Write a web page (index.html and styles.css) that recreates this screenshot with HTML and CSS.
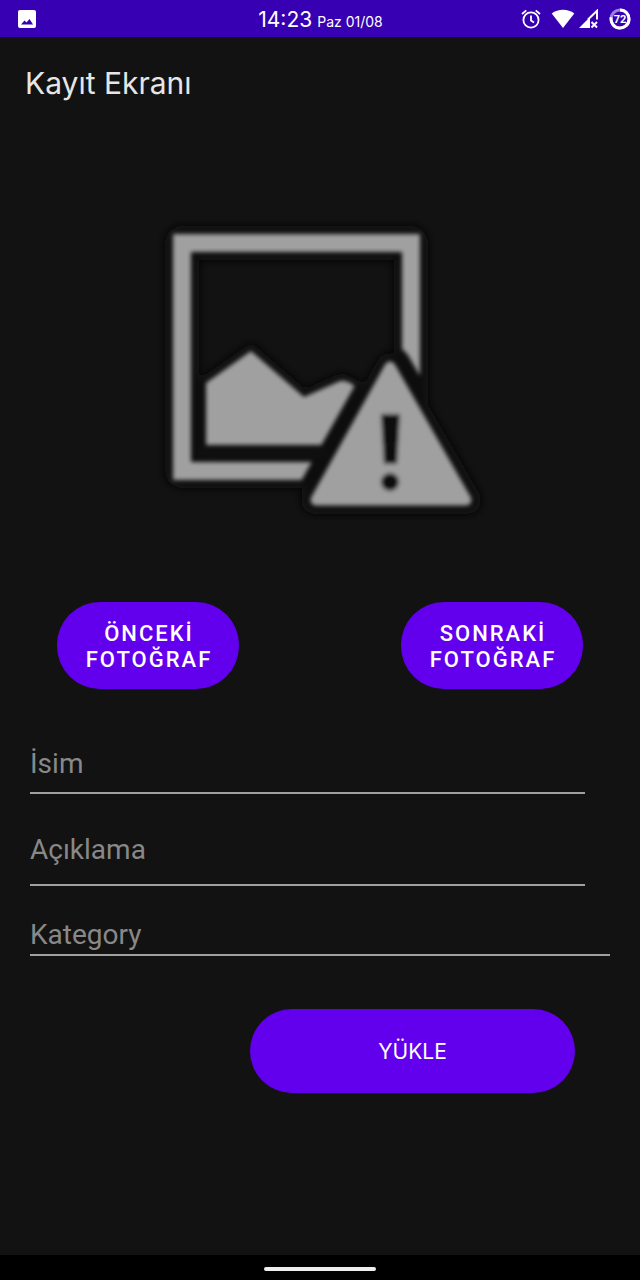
FILE: index.html
```html
<!DOCTYPE html>
<html lang="tr">
<head>
<meta charset="utf-8">
<meta name="viewport" content="width=device-width, initial-scale=1">
<title>Kayıt Ekranı</title>
<link rel="stylesheet" href="styles.css">
</head>
<body>
<div class="screen">
  <header class="status-bar">
    <svg class="status-photo" width="18" height="18" viewBox="0 0 18 18" aria-hidden="true">
      <rect width="18" height="18" rx="2" fill="#fff"/>
      <path d="M3 14.5 6.5 10.5 8.5 12.5 11.5 9 15 14.5Z" fill="#3700b3"/>
    </svg>
    <div class="clock"><span class="time">14:23</span><span class="date">Paz 01/08</span></div>
    <div class="status-icons">
      <svg width="20" height="20" viewBox="0 0 20 20" fill="none" stroke="#fff" stroke-width="1.8" aria-hidden="true">
        <circle cx="10" cy="11" r="7.6"/>
        <path d="M10 6.5V11.4L13 13.4M1 5 5.3 1.4M19 5 14.7 1.4"/>
      </svg>
      <svg width="24" height="20" viewBox="0 0 24 20" fill="#fff" aria-hidden="true">
        <path d="M.7 4.5C7-.5 17-.5 23.3 4.5L12 19Z"/>
      </svg>
      <svg width="20" height="20" viewBox="0 0 20 20" fill="none" stroke="#fff" aria-hidden="true">
        <path d="M0 19 11 8V19Z" fill="#fff" stroke="none"/>
        <path d="M9 10.5 18 1.8V10.5" stroke-width="2"/>
        <path d="M12.5 13 18 18.5M18 13 12.5 18.5" stroke-width="2"/>
      </svg>
      <svg width="22" height="22" viewBox="0 0 22 22" fill="none" aria-hidden="true">
        <circle cx="11" cy="11" r="9" stroke="#9b80d9" stroke-width="3"/>
        <path d="M11 2A9 9 0 1 1 2.2 9.3" stroke="#fff" stroke-width="3"/>
        <text x="11" y="15" text-anchor="middle" class="battery-level">72</text>
      </svg>
    </div>
  </header>

  <main class="content">
    <h1 class="title">Kayıt Ekranı</h1>

    <svg class="photo" viewBox="0 0 340 310" role="img" aria-label="Fotoğraf yok">
      <defs>
        <filter id="soft" x="-10%" y="-10%" width="120%" height="120%"><feGaussianBlur stdDeviation="2.2"/></filter>
        <filter id="shade" x="-10%" y="-10%" width="120%" height="120%"><feGaussianBlur stdDeviation="5"/></filter>
        <mask id="warning-gap" maskUnits="userSpaceOnUse" x="0" y="0" width="340" height="310">
          <rect width="340" height="310" fill="#fff"/>
          <path d="M240 157 165 290H317Z" fill="#000" stroke="#000" stroke-width="43" stroke-linejoin="round"/>
        </mask>
      </defs>
      <g filter="url(#shade)" fill="none" stroke="#090909" stroke-linejoin="round">
        <path d="M32 33H261V261H32Z" stroke-width="34"/>
        <path d="M56 173 101 141 154 187 192 170 205 177 172 235H56Z" stroke-width="14"/>
        <path d="M240 157 165 290H317Z" stroke-width="28"/>
      </g>
      <g filter="url(#soft)">
        <g mask="url(#warning-gap)">
          <path d="M32 33H261V261H32Z" fill="none" stroke="#a0a0a0" stroke-width="18"/>
          <path d="M56 173 101 141 154 187 190 171Q197 169 207 178L230 235H56Z" fill="#a0a0a0"/>
        </g>
        <path d="M240 157 166 290H316Z" fill="#a0a0a0" stroke="#a0a0a0" stroke-width="11" stroke-linejoin="round"/>
        <path d="M231 204H250L247 254H234Z" fill="#090909"/>
        <circle cx="240" cy="272" r="9" fill="#090909"/>
      </g>
    </svg>

    <div class="photo-nav">
      <button class="button nav-button" type="button">ÖNCEKİ FOTOĞRAF</button>
      <button class="button nav-button" type="button">SONRAKİ FOTOĞRAF</button>
    </div>

    <form class="form">
      <input class="field name" type="text" placeholder="İsim" aria-label="İsim">
      <input class="field description" type="text" placeholder="Açıklama" aria-label="Açıklama">
      <input class="field category" type="text" placeholder="Kategory" aria-label="Kategory">
      <button class="button upload" type="button">YÜKLE</button>
    </form>
  </main>

  <footer class="gesture-bar"><span class="gesture-handle"></span></footer>
</div>
</body>
</html>
```
FILE: styles.css
```css
* { box-sizing: border-box; }

body {
  margin: 0;
  background: #121212;
  color: #fff;
  font-family: Roboto, "Noto Sans", sans-serif;
}

.screen {
  display: flex;
  flex-direction: column;
  min-height: 100vh;
}

.status-bar {
  display: grid;
  grid-template-columns: 1fr auto 1fr;
  align-items: center;
  height: 37px;
  padding: 0 9px 0 18px;
  background: #3700b3;
}

.clock {
  display: flex;
  align-items: baseline;
  gap: 5px;
  padding: 2px 8px 0 0;
  font-family: Inter, sans-serif;
}

.time { font-size: 21px; font-weight: 400; }
.date { font-size: 14px; }

.status-icons {
  display: flex;
  align-items: center;
  justify-content: flex-end;
  gap: 10px;
}

.status-icons svg:nth-child(3) { margin-left: -6px; }

.battery-level {
  fill: #fff;
  font: 700 11px Roboto, sans-serif;
}

.content {
  display: flex;
  flex: 1;
  flex-direction: column;
}

.title {
  margin: 26px 25px 0;
  font: 400 30px/40px Inter, sans-serif;
  color: #e6e6e6;
}

.photo {
  width: 53.125%;
  margin: 107px auto 0;
}

.photo-nav {
  display: flex;
  justify-content: space-between;
  margin: 82px 57px 0;
}

.button {
  border: 0;
  border-radius: 43px;
  background: #6200ee;
  color: #fff;
}

.nav-button {
  width: 182px;
  height: 87px;
  padding: 2px 24px 0 26px;
  font: 500 22px/26px Roboto, sans-serif;
  letter-spacing: 2px;
}

.form {
  display: flex;
  flex-direction: column;
  margin: 45px 30px 0;
}

.field {
  width: 100%;
  border: 0;
  border-bottom: 2px solid #a0a0a0;
  border-radius: 0;
  outline: 0;
  padding: 0;
  background: transparent;
  color: #fff;
  font: 400 28px/36px Roboto, sans-serif;
}

.field::placeholder { color: #888; opacity: 1; }

.name, .description {
  width: auto;
  margin-right: 25px;
}

.name { height: 60px; }
.description { height: 70px; margin-top: 22px; padding-bottom: 2px; }
.category { height: 42px; margin-top: 28px; }

.upload {
  align-self: flex-end;
  width: 56%;
  height: 84px;
  margin: 53px 35px 0 0;
  padding-top: 3px;
  font: 400 21px/28px Inter, sans-serif;
}

.gesture-bar {
  display: flex;
  align-items: center;
  justify-content: center;
  height: 25px;
  padding-top: 2px;
  background: #000;
}

.gesture-handle {
  width: 112px;
  height: 4px;
  border-radius: 2px;
  background: #eee;
}
```
